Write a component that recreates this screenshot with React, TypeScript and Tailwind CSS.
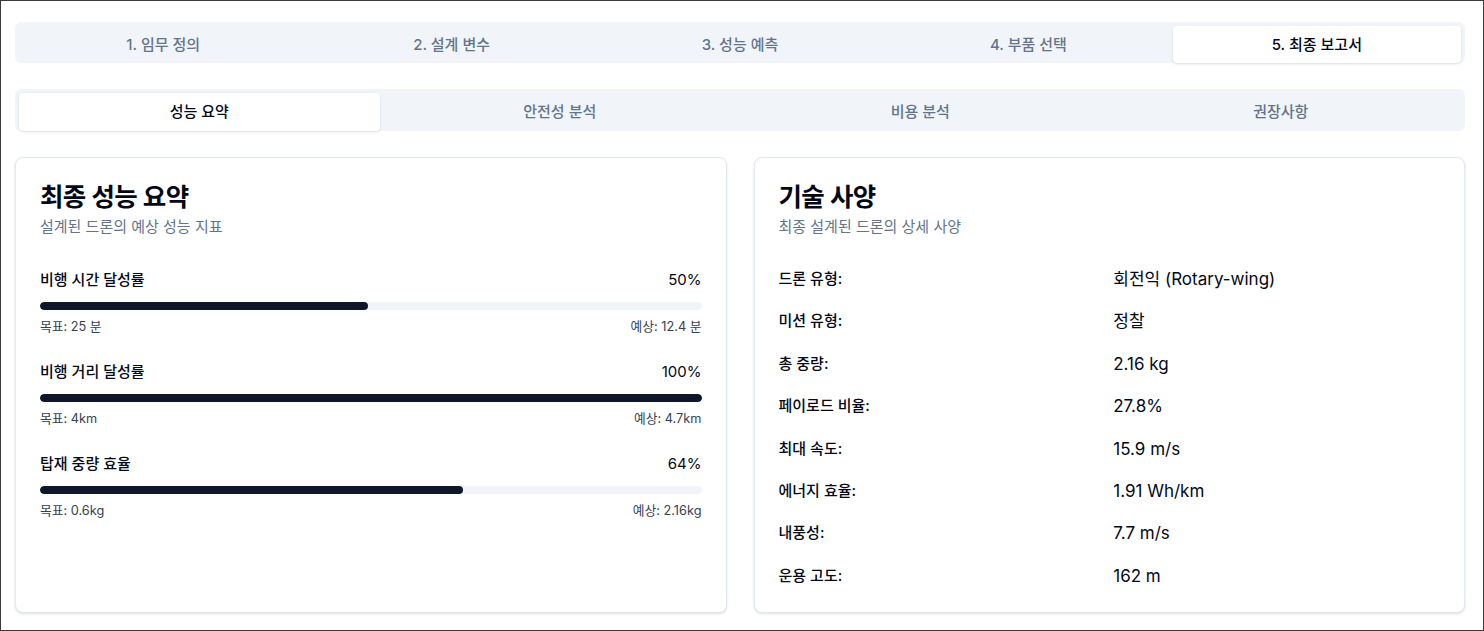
import React from "react";

const steps = ["1. 임무 정의", "2. 설계 변수", "3. 성능 예측", "4. 부품 선택", "5. 최종 보고서"];
const subTabs = ["성능 요약", "안전성 분석", "비용 분석", "권장사항"];

const bars = [
  { label: "비행 시간 달성률", pct: "50%", value: 49.6, target: "목표: 25 분", est: "예상: 12.4 분" },
  { label: "비행 거리 달성률", pct: "100%", value: 100, target: "목표: 4km", est: "예상: 4.7km" },
  { label: "탑재 중량 효율", pct: "64%", value: 64, target: "목표: 0.6kg", est: "예상: 2.16kg" },
];

const specs: [string, string][] = [
  ["드론 유형:", "회전익 (Rotary-wing)"],
  ["미션 유형:", "정찰"],
  ["총 중량:", "2.16 kg"],
  ["페이로드 비율:", "27.8%"],
  ["최대 속도:", "15.9 m/s"],
  ["에너지 효율:", "1.91 Wh/km"],
  ["내풍성:", "7.7 m/s"],
  ["운용 고도:", "162 m"],
];

export default function App() {
  return (
    <div
      className="w-[1484px] h-[631px] border border-[#3a3a3a] bg-white overflow-hidden"
      style={{ fontFamily: "Inter, 'Noto Sans CJK KR', 'Noto Sans', sans-serif" }}
    >
      <div className="pt-[21px] pl-[14px] pr-[18px]">
        <div className="grid grid-cols-5 h-[41px] bg-[#f1f5f9] rounded-md px-1 pt-1 items-start">
          {steps.map((s, i) => (
            <div
              key={s}
              className={
                i === 4
                  ? "h-[37px] flex items-center justify-center rounded-sm bg-white text-[15px] leading-5 font-medium text-[#020817] shadow-sm"
                  : "h-[37px] flex items-center justify-center text-[15px] leading-5 font-medium text-[#64748b]"
              }
            >
              {s}
            </div>
          ))}
        </div>

        <div className="mt-[26px] grid grid-cols-4 h-[42px] bg-[#f1f5f9] rounded-md px-1 pt-1 items-start">
          {subTabs.map((s, i) => (
            <div
              key={s}
              className={
                i === 0
                  ? "h-[38px] flex items-center justify-center rounded-sm bg-white text-[15px] leading-5 font-medium text-[#020817] shadow-sm"
                  : "h-[38px] flex items-center justify-center text-[15px] leading-5 font-medium text-[#64748b]"
              }
            >
              {s}
            </div>
          ))}
        </div>

        <div className="mt-[26px] grid grid-cols-2 gap-[27px]">
          <div className="rounded-lg border border-[#e2e8f0] bg-white shadow-sm">
            <div className="px-6 pt-[23px]">
              <h2 className="text-[25.5px] leading-8 font-semibold tracking-tight text-[#020817]">최종 성능 요약</h2>
              <p className="mt-[4px] text-[15px] leading-5 text-[#64748b]">설계된 드론의 예상 성능 지표</p>
            </div>
            <div className="px-6 pt-[33px] pb-6 flex flex-col gap-[27px]">
              {bars.map((b) => (
                <div key={b.label}>
                  <div className="flex justify-between text-[15px] leading-5 text-[#020817]">
                    <span className="font-medium">{b.label}</span>
                    <span>{b.pct}</span>
                  </div>
                  <div className="mt-[12px] h-2 w-full rounded-full bg-[#f1f5f9] overflow-hidden">
                    <div className="h-full rounded-full bg-[#0f172a]" style={{ width: `${b.value}%` }} />
                  </div>
                  <div className="mt-[9px] flex justify-between text-[12.75px] leading-4 text-[#374151]">
                    <span>{b.target}</span>
                    <span>{b.est}</span>
                  </div>
                </div>
              ))}
            </div>
          </div>

          <div className="rounded-lg border border-[#e2e8f0] bg-white shadow-sm">
            <div className="px-6 pt-[23px]">
              <h2 className="text-[25.5px] leading-8 font-semibold tracking-tight text-[#020817]">기술 사양</h2>
              <p className="mt-[4px] text-[15px] leading-5 text-[#64748b]">최종 설계된 드론의 상세 사양</p>
            </div>
            <div className="px-6 pt-[30px] pb-6 grid grid-cols-2 gap-x-2 gap-y-[18.4px] items-center">
              {specs.map(([k, v]) => (
                <React.Fragment key={k}>
                  <div className="text-[15px] leading-6 font-medium text-[#020817]">{k}</div>
                  <div className="text-[17px] leading-6 text-[#020817]">{v}</div>
                </React.Fragment>
              ))}
            </div>
          </div>
        </div>
      </div>
    </div>
  );
}
